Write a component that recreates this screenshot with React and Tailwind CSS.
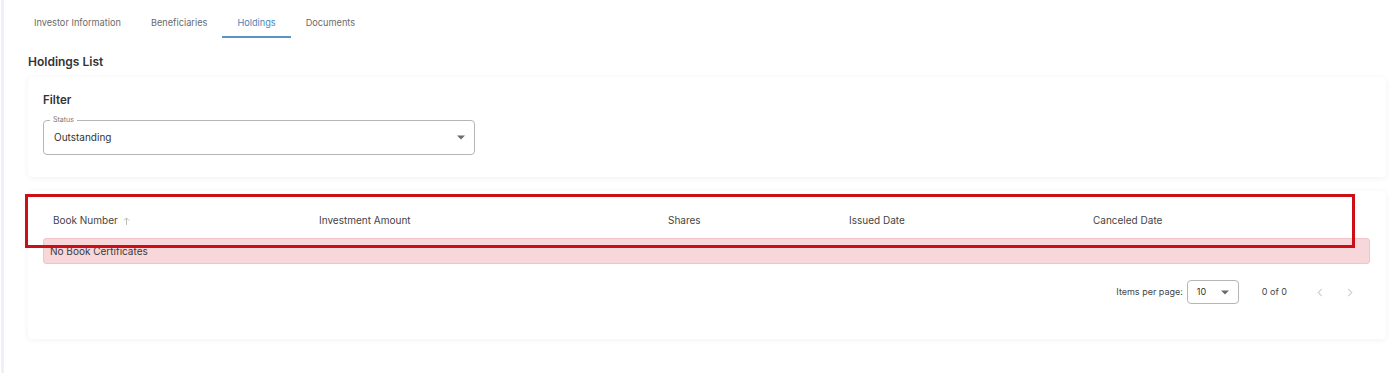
import React from "react";

const font = "font-['Inter','Liberation_Sans',sans-serif]";

function Caret({ className = "" }) {
  return (
    <svg width="8" height="5" viewBox="0 0 10 5" className={className}>
      <path d="M0 0 L5 5 L10 0 Z" fill="#6b6b6b" />
    </svg>
  );
}

function Chevron({ dir }) {
  return (
    <svg width="6" height="9" viewBox="0 0 6 10" fill="none" stroke="#d0d0d0" strokeWidth="1.3">
      {dir === "left" ? <path d="M5 1 L1 5 L5 9" /> : <path d="M1 1 L5 5 L1 9" />}
    </svg>
  );
}

export default function App() {
  const tabs = ["Investor Information", "Beneficiaries", "Holdings", "Documents"];
  const cols = [
    { label: "Book Number", w: "w-[266px]", sort: true },
    { label: "Investment Amount", w: "w-[349px]" },
    { label: "Shares", w: "w-[181px]" },
    { label: "Issued Date", w: "w-[244px]" },
    { label: "Canceled Date", w: "flex-1" },
  ];
  return (
    <div className={`${font} flex min-h-[373px] w-[1400px] bg-white text-[#333]`}>
      <div className="ml-[1px] w-[3px] bg-[#eef1f5]" />
      <div className="flex-1 flex flex-col">
        <div className="flex pl-[15px] h-[38px]">
          {tabs.map((t) => (
            <div
              key={t}
              className={`px-[15px] flex items-center text-[9.2px] pt-[9px] border-b-2 ${
                t === "Holdings" ? "border-[#5b93c2] text-[#4a86b8]" : "border-transparent text-[#6b6b6b]"
              }`}
            >
              {t}
            </div>
          ))}
        </div>
        <div className="pl-[24px] pr-[14px]">
          <div className="mt-[16px] text-[12px] font-semibold text-[#333] leading-[16px]">Holdings List</div>
          <div className="mt-[7px] h-[100px] rounded-[4px] bg-white shadow-[0_1px_6px_rgba(0,0,0,0.06)] px-[15px] pt-[16px]">
            <div className="text-[11.5px] font-semibold text-[#333] leading-[14px]">Filter</div>
            <div className="relative mt-[13px] w-[432px] h-[35px] rounded-[4px] border border-[#b5b5b5] flex items-center pl-[10px] pr-[9px]">
              <span className="absolute -top-[6px] left-[6px] bg-white px-[3px] text-[7px] leading-[10px] text-[#777]">Status</span>
              <span className="text-[10px] text-[#333] flex-1">Outstanding</span>
              <Caret />
            </div>
          </div>
          <div className="relative mt-[14px] h-[148px] rounded-[4px] bg-white shadow-[0_1px_6px_rgba(0,0,0,0.06)] pl-[15px] pr-[16px] pt-[12px]">
            <div className="flex h-[35px] items-center">
              {cols.map((c) => (
                <div key={c.label} className={`${c.w} pl-[10px] text-[10px] text-[#444] flex items-center gap-[5px]`}>
                  {c.label}
                  {c.sort && (
                    <svg width="7" height="8" viewBox="0 0 8 9" fill="none" stroke="#b8b8b8" strokeWidth="1.1">
                      <path d="M4 9 V1 M1 4 L4 1 L7 4" />
                    </svg>
                  )}
                </div>
              ))}
            </div>
            <div className="h-[26px] rounded-[3px] bg-[#f8d7da] border border-[#f1c4c8] flex items-center pl-[6px] text-[10px] text-[#3a3a3a]">
              No Book Certificates
            </div>
            <div className="flex items-center justify-end mt-[16px] h-[24px] pr-[17px]">
              <span className="text-[9px] text-[#444]">Items per page:</span>
              <div className="ml-[4px] w-[52px] h-[24px] rounded-[4px] border border-[#b5b5b5] flex items-center pl-[9px] pr-[9px]">
                <span className="text-[9px] flex-1">10</span>
                <Caret />
              </div>
              <span className="ml-[23px] text-[9px] text-[#444]">0 of 0</span>
              <div className="ml-[30px] flex items-center gap-[24px]">
                <Chevron dir="left" />
                <Chevron dir="right" />
              </div>
            </div>
            <div className="absolute left-[-3px] top-[3px] w-[1330px] h-[54px] border-[3px] border-[#cc0f16]" />
          </div>
        </div>
      </div>
    </div>
  );
}
